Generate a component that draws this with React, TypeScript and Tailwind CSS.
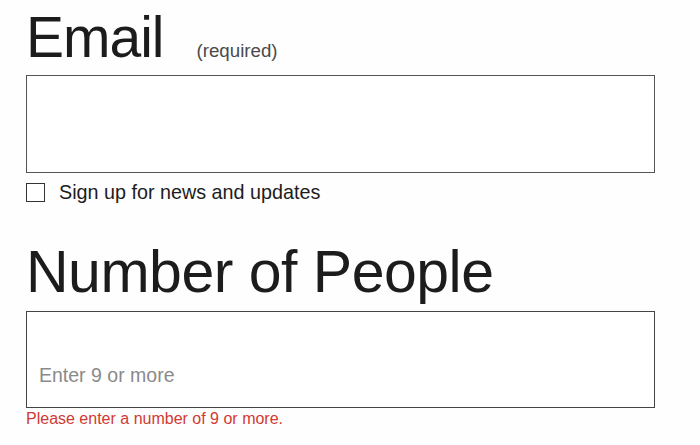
export default function App() {
  return (
    <div
      className="min-h-[445px] w-[700px] bg-[#fefefe] pl-[26px] text-[#1c1c1c]"
      style={{ fontFamily: '"Liberation Sans", Arial, sans-serif' }}
    >
      {/* Email field */}
      <div className="flex items-baseline pt-[9px]">
        <h2 className="text-[57px] leading-none tracking-[-1px]">Email</h2>
        <span className="ml-[33px] text-[18.7px] leading-none text-[#4a4a4a]">(required)</span>
      </div>
      <input
        type="email"
        className="mt-[9px] block h-[98px] w-[629px] border-[1.5px] border-[#555] bg-white px-[12px] text-[19px] outline-none"
      />
      <label className="mt-[10px] flex items-center gap-[14px]">
        <span className="block h-[19px] w-[19px] border-[1.5px] border-[#333] bg-white" />
        <span className="text-[19.75px] leading-none">Sign up for news and updates</span>
      </label>

      {/* Number of people field */}
      <h2 className="mt-[40px] text-[59px] leading-none tracking-[-0.5px]">Number of People</h2>
      <input
        type="text"
        placeholder="Enter 9 or more"
        className="mt-[9px] block h-[97px] w-[629px] border-[1.5px] border-[#444] bg-white pl-[12px] pt-[53px] pb-[21px] text-[19.5px] leading-[19px] outline-none placeholder:text-[#8a8a8a]"
      />
      <p className="mt-[3px] text-[16px] leading-none text-[#d03a33]">
        Please enter a number of 9 or more.
      </p>
    </div>
  )
}
